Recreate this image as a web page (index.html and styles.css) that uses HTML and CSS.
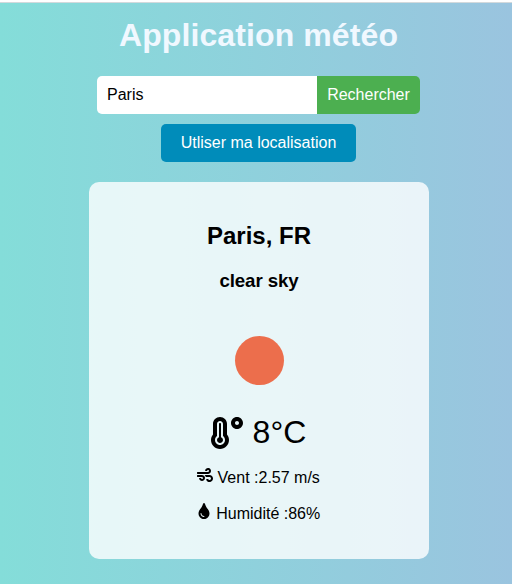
FILE: index.html
```html
<!DOCTYPE html>
<html lang="fr">
<head>
<meta charset="utf-8">
<title>Application météo</title>
<link rel="stylesheet" href="styles.css">
</head>
<body>
<main class="app">
  <h1 class="title">Application météo</h1>
  <form class="search">
    <input class="search-input" type="text" value="Paris">
    <button class="search-button" type="button">Rechercher</button>
  </form>
  <button class="locate-button" type="button">Utliser ma localisation</button>
  <section class="card">
    <h2 class="city">Paris, FR</h2>
    <h3 class="description">clear sky</h3>
    <div class="sun"></div>
    <p class="temperature">
      <svg class="icon thermometer" viewBox="0 0 512 512"><path d="M416 0c-52.9 0-96 43.1-96 96s43.1 96 96 96 96-43.1 96-96-43.1-96-96-96zm0 128c-17.7 0-32-14.3-32-32s14.3-32 32-32 32 14.3 32 32-14.3 32-32 32zm-160-16C256 50.1 205.9 0 144 0S32 50.1 32 112v166.5C12.3 303.2 0 334 0 368c0 79.5 64.5 144 144 144s144-64.5 144-144c0-34-12.3-64.9-32-89.5V112zM144 448c-44.1 0-80-35.9-80-80 0-25.5 12.2-48.9 32-63.8V112c0-26.5 21.5-48 48-48s48 21.5 48 48v192.2c19.8 14.8 32 38.2 32 63.8 0 44.1-35.9 80-80 80zm16-125.1V112c0-8.8-7.2-16-16-16s-16 7.2-16 16v210.9c-18.6 6.6-32 24.2-32 45.1 0 26.5 21.5 48 48 48s48-21.5 48-48c0-20.9-13.4-38.5-32-45.1z"/></svg>
      8°C
    </p>
    <p class="detail wind">
      <svg class="icon" viewBox="0 0 512 512"><path d="M156.7 256H16c-8.8 0-16 7.2-16 16v32c0 8.8 7.2 16 16 16h142.2c15.9 0 30.8 10.9 33.4 26.6 3.3 20-12.1 37.4-31.6 37.4-14.1 0-26.1-9.2-30.4-21.9-2.1-6.3-8.6-10.1-15.2-10.1H81.6c-9.8 0-17.7 8.8-15.9 18.4 8.6 44.1 47.6 77.6 94.2 77.6 57.1 0 102.7-50.1 95.2-108.6C249 291 205.4 256 156.7 256zM16 224h336c59.7 0 106.8-54.8 93.8-116.7-7.6-36.2-36.9-65.5-73.1-73.1-55.4-11.6-105.1 24.9-114.9 75.5-1.9 9.6 6.1 18.3 15.8 18.3h32.8c6.7 0 13.1-3.8 15.2-10.1C325.9 105.2 337.9 96 352 96c19.4 0 34.9 17.4 31.6 37.4-2.6 15.7-17.4 26.6-33.4 26.6H16c-8.8 0-16 7.2-16 16v32c0 8.8 7.2 16 16 16zm384 32H243.7c19.3 16.6 33.2 38.8 39.8 64H400c26.5 0 48 21.5 48 48s-21.5 48-48 48c-17.9 0-33.3-9.9-41.6-24.4-2.9-5-8.7-7.6-14.5-7.6h-33.8c-10.9 0-19 10.8-15.3 21.1 17.8 50.6 70.5 84.8 129.4 72.3 41.2-8.7 75.1-41.6 84.7-82.7C526 321.5 470.5 256 400 256z"/></svg>
      Vent :2.57 m/s
    </p>
    <p class="detail">
      <svg class="icon drop" viewBox="0 0 352 512"><path d="M205.22 22.09c-7.94-28.78-49.44-30.12-58.44 0C100.01 179.85 0 222.72 0 333.91 0 432.35 78.72 512 176 512s176-79.65 176-178.09c0-111.75-99.79-153.34-146.78-311.82zM176 448c-61.75 0-112-50.25-112-112 0-8.84 7.16-16 16-16s16 7.16 16 16c0 44.11 35.89 80 80 80 8.84 0 16 7.16 16 16s-7.16 16-16 16z"/></svg>
      Humidité :86%
    </p>
  </section>
</main>
</body>
</html>
```
FILE: styles.css
```css
* {
  box-sizing: border-box;
}

body {
  margin: 0;
  font-family: "Liberation Sans", Arial, sans-serif;
  font-size: 16px;
  color: #000;
}

.app {
  display: flex;
  flex-direction: column;
  align-items: center;
  height: 584px;
  padding: 14px 0 0 6px;
  border-top: 2px solid #fff;
  background: linear-gradient(to right, #84ddd9, #9ac4df);
  box-shadow: inset 0 1px #d3d9dc;
}

.title {
  margin: 0 1px 0 0;
  font-size: 32px;
  line-height: 38px;
  letter-spacing: 0.1px;
  color: #f0f8ff;
}

.search {
  display: flex;
  margin: 22px 1px 0 0;
}

.search-input,
.search-button,
.locate-button {
  height: 38px;
  border: 0;
  font: inherit;
}

.search-input {
  width: 220px;
  padding: 0 10px;
  border-radius: 5px 0 0 5px;
  background: #fff;
}

.search-button {
  width: 103px;
  padding: 0;
  border-radius: 0 5px 5px 0;
  background: #4caf50;
  color: #fff;
}

.locate-button {
  width: 195px;
  margin: 10px 1px 0 0;
  padding: 0;
  border-radius: 5px;
  background: #008cba;
  color: #fff;
}

.card {
  display: flex;
  flex-direction: column;
  align-items: center;
  width: 340px;
  height: 377px;
  margin-top: 20px;
  padding-top: 40px;
  border-radius: 10px;
  background: rgba(255, 255, 255, 0.8);
}

.city {
  margin: 0;
  font-size: 24px;
  line-height: 27px;
}

.description {
  margin: 21px 0 0;
  font-size: 18.72px;
  line-height: 21px;
  letter-spacing: -0.1px;
}

.sun {
  width: 49px;
  height: 49px;
  margin-top: 45px;
  border-radius: 50%;
  background: #ec6e4c;
}

.temperature {
  height: 36px;
  margin: 29px 0 0;
  font-size: 32px;
  line-height: 36px;
}

.detail {
  height: 18px;
  margin: 18px 0 0;
  line-height: 18px;
}

.wind {
  margin-top: 17px;
}

.icon {
  width: 1em;
  height: 1em;
  margin-left: -1px;
  fill: currentColor;
  vertical-align: baseline;
}

.thermometer {
  margin-right: 1px;
  vertical-align: -6px;
}

.drop {
  width: 0.875em;
  margin-right: 1px;
}
```
